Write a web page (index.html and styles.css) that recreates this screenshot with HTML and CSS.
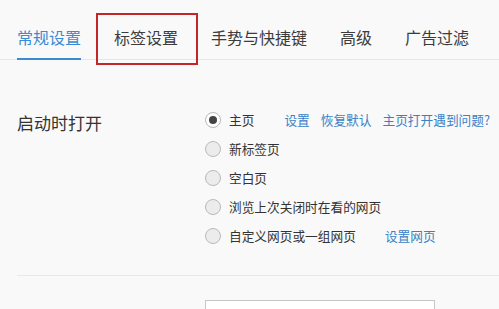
FILE: index.html
```html
<!DOCTYPE html>
<html lang="zh-CN">
<head>
<meta charset="utf-8">
<link rel="stylesheet" href="styles.css">
</head>
<body>
<div class="tabs">
  <div class="tab active">常规设置</div>
  <div class="tab marked">标签设置<span class="mark"></span></div>
  <div class="tab">手势与快捷键</div>
  <div class="tab">高级</div>
  <div class="tab">广告过滤</div>
</div>
<div class="section">
  <div class="label">启动时打开</div>
  <div class="options">
    <div class="row"><span class="radio checked"></span><span class="text">主页</span><a class="link first">设置</a><a class="link">恢复默认</a><a class="link">主页打开遇到问题?</a></div>
    <div class="row"><span class="radio"></span><span class="text">新标签页</span></div>
    <div class="row"><span class="radio"></span><span class="text">空白页</span></div>
    <div class="row"><span class="radio"></span><span class="text">浏览上次关闭时在看的网页</span></div>
    <div class="row"><span class="radio"></span><span class="text">自定义网页或一组网页</span><a class="link first2">设置网页</a></div>
  </div>
</div>
<div class="divider"></div>
<div class="field-row"><div class="field"></div></div>
</body>
</html>
```
FILE: styles.css
```css
html, body {
  margin: 0;
  padding: 0;
}
body {
  background: #f9f9f9;
  font-family: "Noto Sans CJK SC", "Microsoft YaHei", sans-serif;
  color: #333;
  overflow: hidden;
  width: 499px;
  height: 309px;
}
.tabs {
  display: flex;
  gap: 33px;
  padding-left: 17px;
  height: 60px;
  box-shadow: inset 0 -1px 0 #e6e6e6;
}
.tab {
  position: relative;
  font-size: 16px;
  line-height: 22px;
  padding-top: 26px;
  padding-bottom: 10px;
  border-bottom: 2px solid transparent;
  color: #3c3c3c;
  white-space: nowrap;
}
.tab.active {
  color: #3b8ad2;
  border-bottom-color: #3b8ad2;
}
.mark {
  position: absolute;
  left: -18px;
  right: -20px;
  top: 13px;
  bottom: -7px;
  border: 2px solid #c3252b;
}
.section {
  display: flex;
  padding-top: 45px;
  padding-left: 17px;
}
.label {
  width: 188px;
  font-size: 17px;
  line-height: 22px;
  margin-top: 7px;
  color: #333;
}
.options {
  display: flex;
  flex-direction: column;
}
.row {
  display: flex;
  align-items: center;
  height: 29px;
  font-size: 12.7px;
}
.radio {
  width: 14px;
  height: 14px;
  border: 1px solid #b9b9b9;
  border-radius: 50%;
  background: #ececec;
  margin-right: 8px;
  position: relative;
  flex: none;
}
.radio.checked {
  background: #fff;
}
.radio.checked::after {
  content: "";
  position: absolute;
  left: 3px;
  top: 3px;
  width: 8px;
  height: 8px;
  border-radius: 50%;
  background: #444;
}
.text {
  color: #333;
  white-space: nowrap;
}
.link {
  color: #3a82c6;
  margin-left: 11px;
  white-space: nowrap;
}
.link.first {
  margin-left: 30px;
}
.link.first2 {
  margin-left: 29px;
}
.divider {
  margin: 25px 0 0 17px;
  height: 1px;
  background: #e8e8e8;
}
.field-row {
  padding: 24px 0 0 205px;
}
.field {
  width: 228px;
  height: 30px;
  border: 1px solid #c6c6c6;
  background: #fff;
}
```
